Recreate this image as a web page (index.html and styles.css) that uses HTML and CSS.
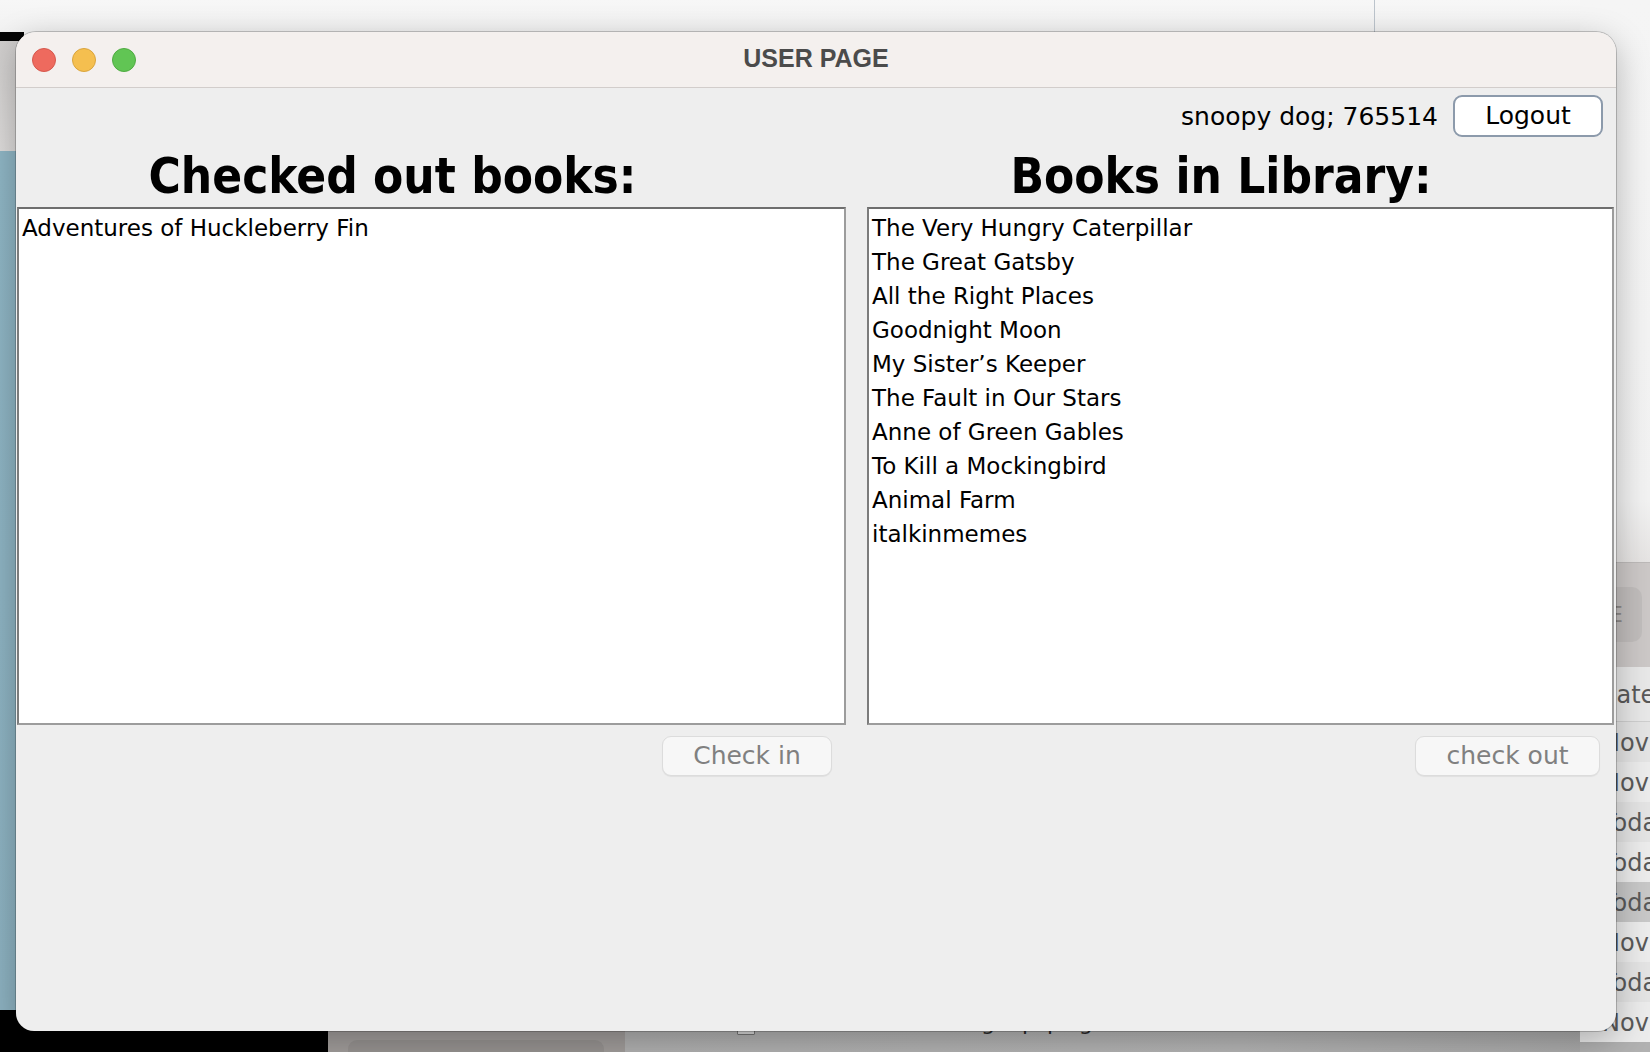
FILE: index.html
```html
<!DOCTYPE html>
<html lang="en">
<head>
<meta charset="utf-8">
<title>USER PAGE</title>
<link rel="stylesheet" href="styles.css">
</head>
<body>
<div class="desktop">
  <div class="bg-top-line"></div>

  <div class="bg-left">
    <div class="bl-black"></div>
    <div class="bl-gray"></div>
    <div class="bl-blue"></div>
    <div class="bl-bottom"></div>
  </div>

  <div class="bg-bottom">
    <div class="bb-black"></div>
    <div class="bb-mid"><div class="bb-mid-box"></div></div>
    <div class="bb-right">
      <div class="bb-icon"></div>
      <span class="bb-text">Eating up.png</span>
    </div>
  </div>

  <div class="bg-right">
    <div class="br-top"></div>
    <div class="br-panel"><div class="br-pill">E</div></div>
    <div class="br-head">Date</div>
    <div class="br-row">Nov</div>
    <div class="br-row alt">Nov</div>
    <div class="br-row">Toda</div>
    <div class="br-row alt">Toda</div>
    <div class="br-row sel">Toda</div>
    <div class="br-row alt">Nov</div>
    <div class="br-row">Toda</div>
    <div class="br-row alt">Nov</div>
    <div class="br-end"></div>
  </div>

  <div class="window">
    <div class="titlebar">
      <div class="lights">
        <span class="light red"></span>
        <span class="light yellow"></span>
        <span class="light green"></span>
      </div>
      <div class="title">USER PAGE</div>
      <div></div>
    </div>
    <div class="content">
      <div class="userbar">
        <span class="user">snoopy dog; 765514</span>
        <button class="logout">Logout</button>
      </div>
      <div class="columns">
        <div class="col col-left">
          <h1 class="heading">Checked out books:</h1>
          <ul class="list">
            <li>Adventures of Huckleberry Fin</li>
          </ul>
          <div class="actions">
            <button class="action btn-in">Check in</button>
          </div>
        </div>
        <div class="col col-right">
          <h1 class="heading">Books in Library:</h1>
          <ul class="list">
            <li>The Very Hungry Caterpillar</li>
            <li>The Great Gatsby</li>
            <li>All the Right Places</li>
            <li>Goodnight Moon</li>
            <li>My Sister’s Keeper</li>
            <li>The Fault in Our Stars</li>
            <li>Anne of Green Gables</li>
            <li>To Kill a Mockingbird</li>
            <li>Animal Farm</li>
            <li>italkinmemes</li>
          </ul>
          <div class="actions">
            <button class="action btn-out">check out</button>
          </div>
        </div>
      </div>
    </div>
  </div>
</div>
</body>
</html>
```

FILE: styles.css
```css
* { box-sizing: border-box; }

html, body {
  margin: 0;
  padding: 0;
}

body {
  width: 1650px;
  height: 1052px;
  overflow: hidden;
  font-family: "DejaVu Sans", "Noto Sans", sans-serif;
  background: #f1f1f1;
}

.desktop {
  position: relative;
  width: 1650px;
  height: 1052px;
  background: linear-gradient(180deg, #f7f7f7 0px, #f1f1f1 40px, #f2f2f2 600px);
}

/* ---------- background desktop pieces ---------- */
.bg-top-line {
  position: absolute;
  left: 1374px;
  top: 0;
  width: 1px;
  height: 40px;
  background: #bcc4cc;
}

.bg-left {
  position: absolute;
  left: 0;
  top: 32px;
  width: 24px;
  height: 1020px;
  display: flex;
  flex-direction: column;
}
.bl-black { height: 9px; background: #050505; }
.bl-gray { height: 110px; background: linear-gradient(180deg, #cfcdcc, #dedcdb); }
.bl-blue { flex: 1; background: linear-gradient(180deg, #8fb6c5, #8db2c1); }
.bl-bottom { height: 42px; background: #000; }

.bg-bottom {
  position: absolute;
  left: 0;
  top: 1020px;
  width: 1650px;
  height: 32px;
  display: flex;
}
.bb-black { width: 328px; background: #000; }
.bb-mid {
  width: 297px;
  background: #a29e9c;
  padding: 20px 21px 0 20px;
}
.bb-mid-box {
  height: 100%;
  border-radius: 9px 9px 0 0;
  background: #989492;
}
.bb-right {
  flex: 1;
  position: relative;
  background: linear-gradient(90deg, #b2b2b2, #b6b6b6 60%, #a9a9a9);
}
.bb-icon {
  position: absolute;
  left: 112px;
  top: 6px;
  width: 18px;
  height: 9px;
  border: 1px solid #777;
  background: #d8d8d8;
  border-radius: 1px;
}
.bb-text {
  position: absolute;
  left: 290px;
  top: -10px;
  font-size: 22px;
  color: #2a2a2a;
  letter-spacing: 2px;
}

.bg-right {
  position: absolute;
  left: 1580px;
  top: 0;
  width: 70px;
  height: 1052px;
  display: flex;
  flex-direction: column;
  font-size: 24px;
  color: #595959;
}
.br-top {
  height: 562px;
  background: linear-gradient(180deg, #f5f5f5 0, #f2f2f2 500px, #e6e4e3 562px);
}
.br-panel {
  height: 105px;
  background: #ccc8c7;
  border-top: 1px solid #bdbab9;
  padding: 24px 8px 0 20px;
}
.br-pill {
  height: 55px;
  border-radius: 10px;
  background: #c1bdbc;
  color: #8d8988;
  font-size: 22px;
  line-height: 55px;
  padding-left: 9px;
}
.br-head {
  height: 55px;
  background: #e8e8e8;
  border-bottom: 1px solid #cfcfcf;
  line-height: 56px;
  padding-left: 18px;
}
.br-row {
  height: 40px;
  line-height: 42px;
  padding-left: 22px;
  background: #e4e4e4;
}
.br-row.alt { background: #ececec; }
.br-row.sel { background: #c8c8c8; }
.br-end { flex: 1; background: #b1b1b1; }

/* ---------- main window ---------- */
.window {
  position: absolute;
  left: 16px;
  top: 32px;
  width: 1600px;
  height: 999px;
  border-radius: 20px 20px 18px 18px;
  overflow: hidden;
  background: #eeeeee;
  box-shadow: 0 0 0 1px rgba(0, 0, 0, 0.2), 0 10px 34px rgba(0, 0, 0, 0.28);
  display: flex;
  flex-direction: column;
  z-index: 2;
}

.titlebar {
  height: 56px;
  flex: none;
  display: grid;
  grid-template-columns: 1fr auto 1fr;
  align-items: center;
  background: #f4f0ee;
  border-bottom: 1px solid #d2cdcb;
}

.lights {
  display: flex;
  gap: 16px;
  padding-left: 16px;
  padding-top: 1px;
}
.light {
  width: 24px;
  height: 24px;
  border-radius: 50%;
  border: 1px solid;
}
.light.red { background: #ee6a5e; border-color: #d5584d; }
.light.yellow { background: #f5bf4f; border-color: #d9a43d; }
.light.green { background: #61c554; border-color: #4fab42; }

.title {
  font-family: "Liberation Sans", Arial, sans-serif;
  font-weight: 700;
  font-size: 25px;
  color: #4b4b4b;
  padding-bottom: 2px;
}

.content {
  flex: 1;
  display: flex;
  flex-direction: column;
  padding: 7px 2px 0 1px;
}

.userbar {
  display: flex;
  justify-content: flex-end;
  align-items: center;
  gap: 15px;
  height: 42px;
  padding-right: 11px;
}
.user {
  font-size: 25px;
  color: #000;
}
.logout {
  width: 150px;
  height: 42px;
  border: 2px solid #8c9aab;
  border-radius: 9px;
  background: #ffffff;
  font-family: "DejaVu Sans", sans-serif;
  font-size: 25px;
  color: #000;
  padding: 0 0 2px;
}

.columns {
  display: flex;
  gap: 21px;
}
.col-left { width: 829px; }
.col-right { width: 747px; }

.heading {
  margin: 0;
  height: 70px;
  padding-top: 12px;
  line-height: 56px;
  font-family: "DejaVu Sans Condensed", "DejaVu Sans", sans-serif;
  font-stretch: condensed;
  font-weight: 700;
  font-size: 49px;
  color: #000;
  text-align: center;
  white-space: nowrap;
}
.col-left .heading { padding-right: 78px; }
.col-right .heading { padding-right: 39px; }

.list {
  list-style: none;
  margin: 0;
  height: 518px;
  padding: 2px 3px 0;
  background: #ffffff;
  border: 2px solid;
  border-color: #6e6e6e #9c9c9c #9c9c9c #7c7c7c;
  font-size: 23px;
  line-height: 34px;
  color: #000;
  white-space: nowrap;
}

.actions {
  display: flex;
  justify-content: flex-end;
  margin-top: 11px;
  padding-right: 14px;
}
.action {
  height: 40px;
  border: 1px solid #dcdcdc;
  border-radius: 9px;
  background: #f7f7f7;
  box-shadow: 0 1px 1px rgba(0, 0, 0, 0.06);
  font-family: "DejaVu Sans", sans-serif;
  font-size: 25px;
  color: #808080;
  padding: 0 0 2px;
}
.btn-in { width: 170px; }
.btn-out { width: 185px; }
```
